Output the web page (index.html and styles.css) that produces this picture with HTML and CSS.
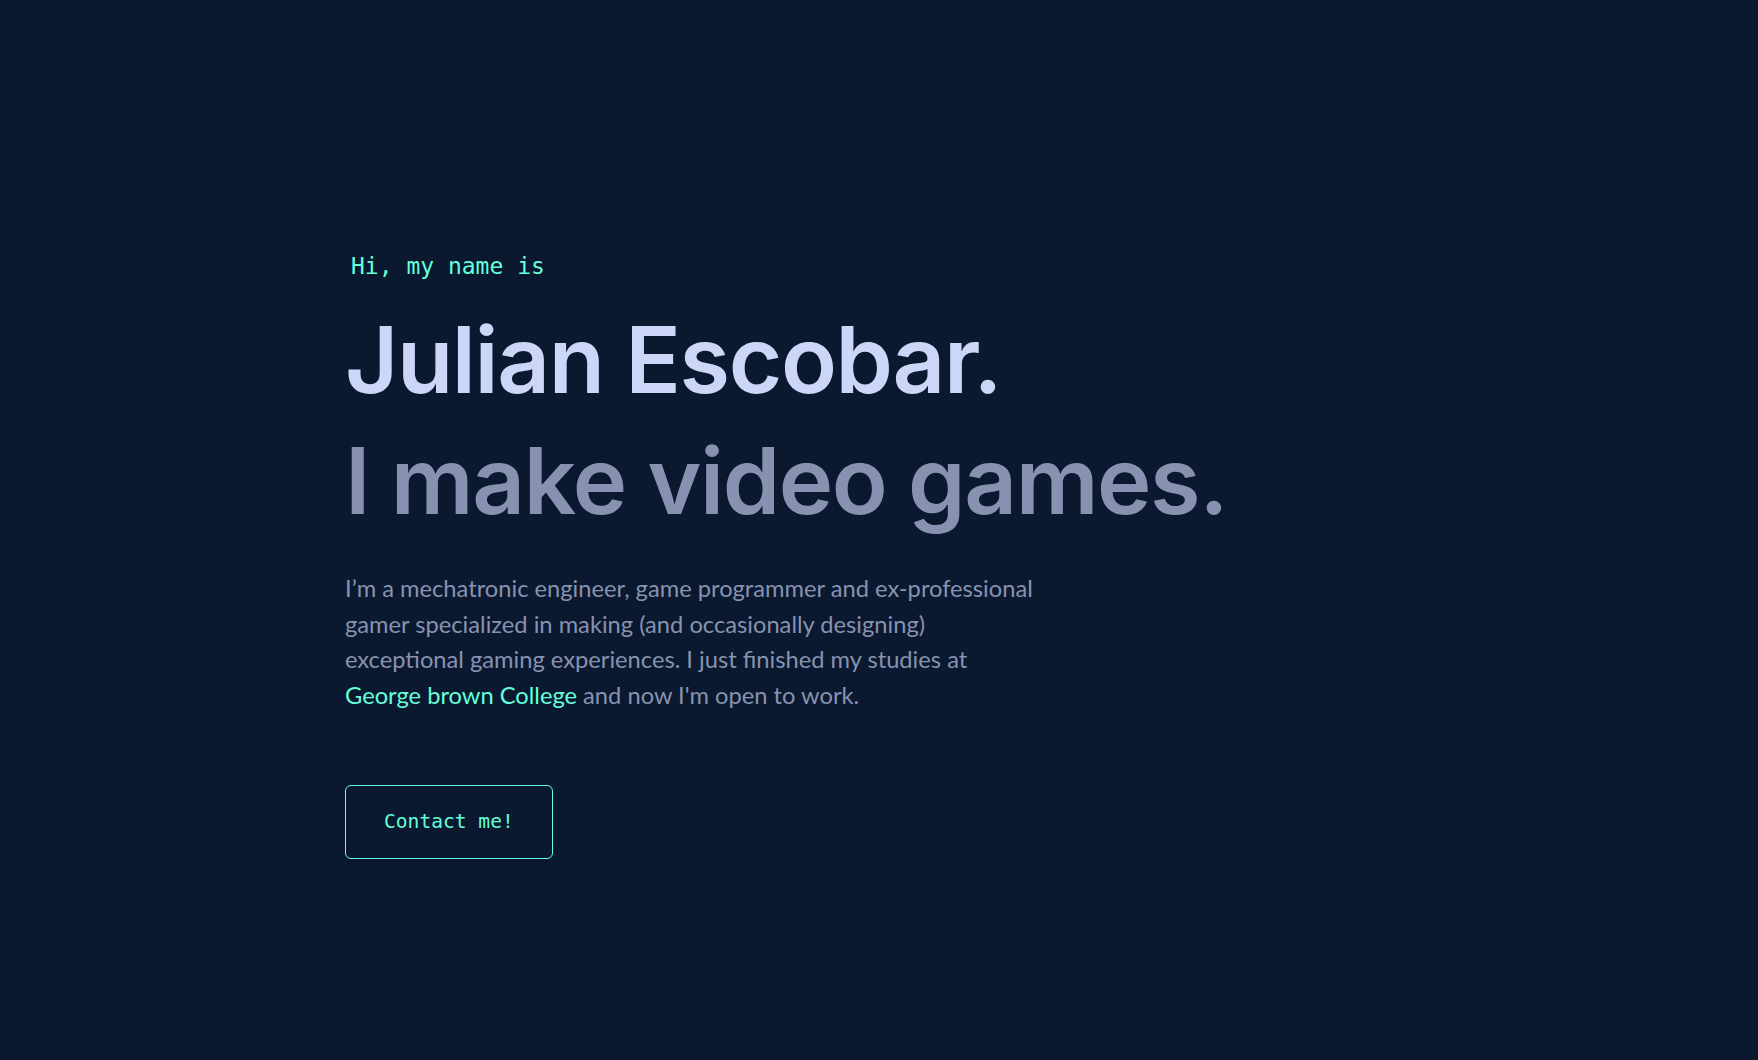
FILE: index.html
```html
<!DOCTYPE html>
<html lang="en">
<head>
<meta charset="utf-8">
<title>Julian Escobar</title>
<link rel="stylesheet" href="styles.css">
</head>
<body>
<main class="page">
  <section class="hero">
    <h1 class="hero-intro">Hi, my name is</h1>
    <h2 class="hero-name">Julian Escobar.</h2>
    <h3 class="hero-tagline">I make video games.</h3>
    <p class="hero-text">I’m a mechatronic engineer, game programmer and ex-professional gamer specialized in making (and occasionally designing) exceptional gaming experiences. I just finished my studies at <a class="hero-link" href="#">George brown College</a> and now I'm open to work.</p>
    <a class="hero-button" href="#">Contact me!</a>
  </section>
</main>
</body>
</html>
```

FILE: styles.css
```css
html, body {
  margin: 0;
  padding: 0;
  background: #0a192f;
}

body {
  font-family: "Lato", "Noto Sans", sans-serif;
  color: #8892b0;
  min-height: 1060px;
}

.page {
  padding: 254px 0 0 345px;
}

.hero {
  display: flex;
  flex-direction: column;
  align-items: flex-start;
}

.hero-intro {
  margin: 0 0 20px 6px;
  font-family: "DejaVu Sans Mono", "Liberation Mono", monospace;
  font-weight: 400;
  font-size: 23px;
  line-height: 25px;
  color: #64ffda;
}

.hero-name,
.hero-tagline {
  margin: 0;
  font-family: "Inter", "Lato", sans-serif;
  font-weight: 600;
  font-size: 92px;
  line-height: 121px;
  letter-spacing: -1.4px;
}

.hero-name {
  color: #ccd6f6;
}

.hero-tagline {
  color: #8892b0;
}

.hero-text {
  margin: 30px 0 0 0;
  max-width: 700px;
  font-size: 23.7px;
  line-height: 35.5px;
  color: #8892b0;
}

.hero-link {
  color: #64ffda;
  text-decoration: none;
}

.hero-button {
  margin-top: 72px;
  padding: 26px 38px;
  border: 1px solid #64ffda;
  border-radius: 6px;
  font-family: "DejaVu Sans Mono", "Liberation Mono", monospace;
  font-size: 19.6px;
  line-height: 20px;
  color: #64ffda;
  text-decoration: none;
}
```
